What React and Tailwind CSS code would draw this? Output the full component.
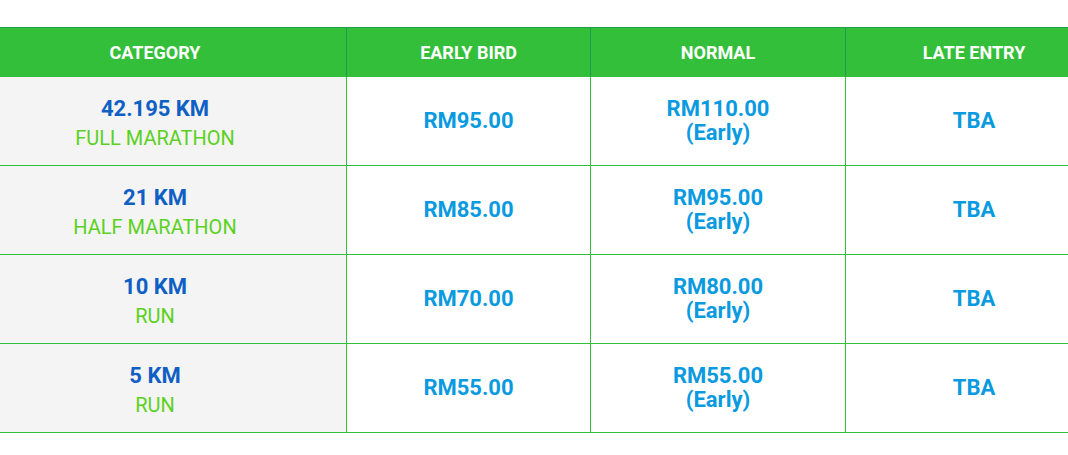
import React from "react";

const rows = [
  { km: "42.195 KM", name: "FULL MARATHON", early: "RM95.00", normal: "RM110.00" },
  { km: "21 KM", name: "HALF MARATHON", early: "RM85.00", normal: "RM95.00" },
  { km: "10 KM", name: "RUN", early: "RM70.00", normal: "RM80.00" },
  { km: "5 KM", name: "RUN", early: "RM55.00", normal: "RM55.00" },
];

const cols = "grid grid-cols-[346px_244px_255px_1fr]";

export default function App() {
  return (
    <div className="w-[1068px] h-[455px] bg-white overflow-hidden pt-[27px]" style={{ fontFamily: "Roboto, 'Liberation Sans', sans-serif" }}>
      <div className={`${cols} bg-[#33bf39] border-t border-[#1f9e46] h-[50px] text-white font-bold text-[18px]`}>
        <div className="flex items-center justify-center pr-[36px]">CATEGORY</div>
        <div className="flex items-center justify-center border-l border-[#1e9a55]">EARLY BIRD</div>
        <div className="flex items-center justify-center border-l border-[#1e9a55]">NORMAL</div>
        <div className="flex items-center justify-center border-l border-[#1e9a55] pl-[34px]">LATE ENTRY</div>
      </div>
      {rows.map((r, i) => (
        <div key={i} className={`${cols} h-[89px] border-b border-[#33bf39]`}>
          <div className="bg-[#f4f4f4] flex flex-col items-center justify-center pr-[36px] pt-[5px]">
            <div className="text-[#0f5fc4] font-bold text-[22px] leading-[29px]">{r.km}</div>
            <div className="text-[#5ad11e] text-[20px] leading-[30px]">{r.name}</div>
          </div>
          <div className="border-l border-[#33bf39] flex items-center justify-center text-[#0a9ae0] font-bold text-[22px] pb-[2px]">{r.early}</div>
          <div className="border-l border-[#33bf39] flex flex-col items-center justify-center text-[#0a9ae0] font-bold text-[22px] leading-[24px] pb-[1px]">
            <div>{r.normal}</div>
            <div>(Early)</div>
          </div>
          <div className="border-l border-[#33bf39] flex items-center justify-center text-[#0a9ae0] font-bold text-[22px] pl-[34px] pb-[2px]">TBA</div>
        </div>
      ))}
    </div>
  );
}
